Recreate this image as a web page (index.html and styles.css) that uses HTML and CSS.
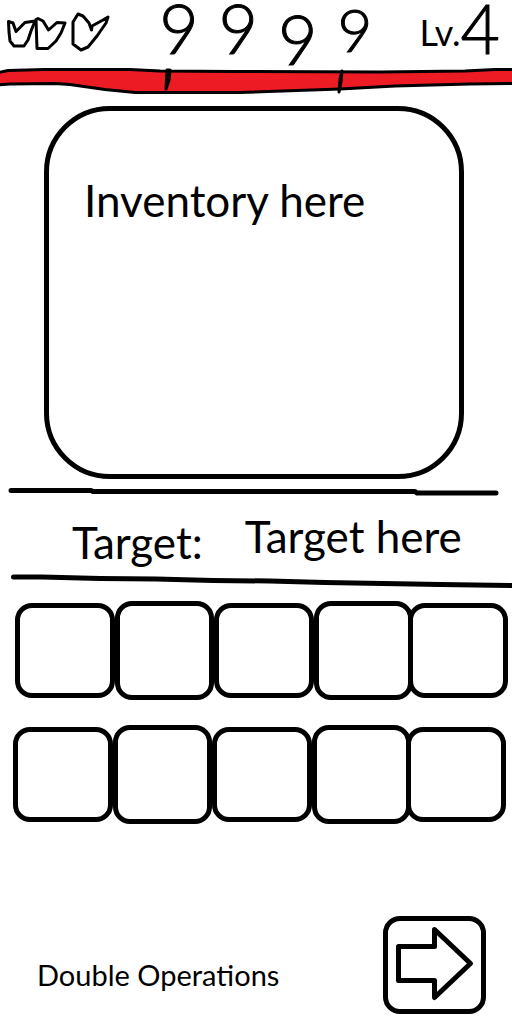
FILE: index.html
```html
<!DOCTYPE html>
<html lang="en">
<head>
<meta charset="utf-8">
<meta name="viewport" content="width=device-width, initial-scale=1">
<title>Inventory</title>
<link rel="stylesheet" href="styles.css">
</head>
<body>
<header class="status">
  <svg class="lives" viewBox="0 0 112 56" role="img" aria-label="Three lives">
    <path d="M8.500 21.500 L9 32 L10 41 L14 46 L24 46 L28 40 L31 31 L35 21 L25 22.500 L16 31.500 L13 23 L8.500 21.500"/>
    <path d="M36 19.500 L37 48.500 L48 48.500 L56 41 L61 33 L65 23 L57 22.500 L48.500 30 L43 21 L38 18.500 L36 20"/>
    <path d="M73 22 L78 14 L83 16 L89 23 L91.500 30 L92 26 L103 20 L108 17 L106 23 L97 36 L88 47 L81 50 L73 44 Z"/>
  </svg>
  <p class="score"><span class="digit">9</span><span class="digit">9</span><span class="digit digit-low">9</span><span class="digit digit-small">9</span></p>
  <p class="level"><span class="level-label">Lv.</span><span class="level-value">4</span></p>
</header>
<svg class="health" viewBox="0 0 512 30" preserveAspectRatio="none" role="img" aria-label="Health">
  <path class="health-fill" d="M-4 6 L8 3.500 L45 2.500 L130 2.500 L160 4 L235 4.500 L380 5 L465 4 L495 2.500 L516 2.500 L516 16.500 L470 17 L395 19 L340 22 L240 25.500 L135 25.500 L105 22.500 L70 17.500 L55 16.500 L10 17 L-4 18 Z"/>
  <path class="health-mark" d="M167 3 L170 3 L169 13 L166 22 Z"/>
  <path class="health-mark" d="M342 4 L341 15 L339 25 L340 12 Z"/>
</svg>
<main>
  <section class="inventory"><h1 class="label">Inventory here</h1></section>
  <svg class="rule" viewBox="0 0 512 8" preserveAspectRatio="none" aria-hidden="true"><path d="M11 2.500 L91 2.500 L93 3.500 L415 3.500 L417 5 L496 5"/></svg>
  <section class="target">
    <h2 class="label">Target:</h2>
    <p class="label target-value">Target here</p>
  </section>
  <svg class="rule rule-slanted" viewBox="0 0 512 14" preserveAspectRatio="none" aria-hidden="true"><path d="M13.500 3 L42 3 L100 4.500 L156 5 L213 6.500 L270 7 L325 8.500 L383 9.500 L440 10.500 L514 11.500"/></svg>
  <div class="slots">
    <button class="slot" aria-label="Slot 1"></button><button class="slot slot-tall" aria-label="Slot 2"></button><button class="slot" aria-label="Slot 3"></button><button class="slot slot-tall" aria-label="Slot 4"></button><button class="slot" aria-label="Slot 5"></button>
  </div>
  <div class="slots slots-second">
    <button class="slot" aria-label="Slot 6"></button><button class="slot slot-tall" aria-label="Slot 7"></button><button class="slot" aria-label="Slot 8"></button><button class="slot slot-tall" aria-label="Slot 9"></button><button class="slot" aria-label="Slot 10"></button>
  </div>
</main>
<footer class="footer">
  <p class="operations">Double Operations</p>
  <button class="next" aria-label="Next">
    <svg class="arrow" viewBox="0 0 93 88" aria-hidden="true"><path d="M10.500 25.500 H46.500 V8.500 L82.500 42.500 L46.500 76.500 V59.500 H10.500 Z"/></svg>
  </button>
</footer>
</body>
</html>
```
FILE: styles.css
```css
* { box-sizing: border-box; }
body {
  margin: 0;
  min-height: 100vh;
  display: flex;
  flex-direction: column;
  background: #fff;
  color: #000;
  font-family: Lato, "Open Sans", sans-serif;
}
h1, h2, p { margin: 0; font-weight: 400; }
button { padding: 0; background: #fff; border: 5px solid #000; border-radius: 17px; }
svg { display: block; fill: none; stroke: #000; stroke-linecap: round; stroke-linejoin: round; }

.status {
  height: 66px;
  display: flex;
  justify-content: space-between;
  padding-right: 12px;
}
.lives { width: 112px; height: 56px; stroke-width: 3px; }
.score {
  display: flex;
  align-items: flex-start;
  gap: 20px;
}
.digit, .level-value {
  font-size: 68px;
  font-weight: 300;
  line-height: 56px;
  -webkit-text-stroke: 1px #000;
}
.digit-low { line-height: 78px; }
.digit-small { font-size: 60px; line-height: 58px; }
.level {
  display: flex;
  align-items: flex-start;
}
.level-label { font-size: 36px; line-height: 64px; }

.health { width: 100%; height: 30px; margin-top: 1px; overflow: hidden; }
.health-fill { fill: #ed1c24; stroke-width: 3px; }
.health-mark { fill: #000; stroke-width: 3px; }

.inventory {
  min-height: 373px;
  margin: 9px 48px 0 44px;
  padding: 64px 35px;
  border: 5px solid #000;
  border-radius: 66px;
}
.label { font-size: 44px; line-height: 50px; white-space: nowrap; }

.rule { width: 100%; height: 8px; margin-top: 9px; stroke-width: 5px; }
.target {
  display: flex;
  align-items: flex-end;
  gap: 42px;
  padding: 15px 40px 6px 72px;
}
.target-value { padding-bottom: 6px; }
.rule-slanted { height: 14px; margin-top: 1px; }

.slots {
  display: flex;
  align-items: center;
  margin-top: 13px;
  padding: 0 4px 0 15px;
}
.slots-second { margin-top: 25px; padding: 0 6px 0 13px; }
.slot { flex: 1; height: 95px; }
.slot-tall { height: 99px; }
.slot:last-child { margin-left: -5px; }

.footer {
  display: flex;
  justify-content: space-between;
  align-items: flex-end;
  margin-top: auto;
  padding: 0 26px 14px 37px;
}
.operations { font-size: 29px; line-height: 34px; padding-bottom: 22px; }
.next { width: 103px; height: 98px; }
.arrow { width: 93px; height: 88px; stroke-width: 5px; }
```
